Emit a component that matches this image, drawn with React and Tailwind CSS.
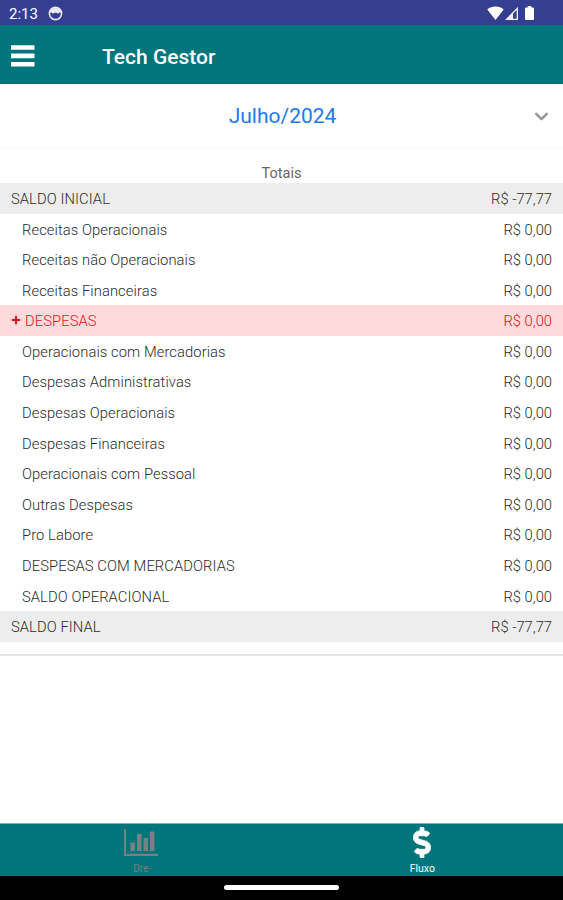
import { FaDollarSign, FaPlus } from "react-icons/fa";
import { ChevronDown } from "lucide-react";

const rows = [
  { label: "SALDO INICIAL", value: "R$ -77,77", type: "total" },
  { label: "Receitas Operacionais", value: "R$ 0,00" },
  { label: "Receitas não Operacionais", value: "R$ 0,00" },
  { label: "Receitas Financeiras", value: "R$ 0,00" },
  { label: "DESPESAS", value: "R$ 0,00", type: "expense" },
  { label: "Operacionais com Mercadorias", value: "R$ 0,00" },
  { label: "Despesas Administrativas", value: "R$ 0,00" },
  { label: "Despesas Operacionais", value: "R$ 0,00" },
  { label: "Despesas Financeiras", value: "R$ 0,00" },
  { label: "Operacionais com Pessoal", value: "R$ 0,00" },
  { label: "Outras Despesas", value: "R$ 0,00" },
  { label: "Pro Labore", value: "R$ 0,00" },
  { label: "DESPESAS COM MERCADORIAS", value: "R$ 0,00" },
  { label: "SALDO OPERACIONAL", value: "R$ 0,00" },
  { label: "SALDO FINAL", value: "R$ -77,77", type: "total" },
];

const rowStyles = {
  total: "bg-[#ededed] pl-[11px] text-[#2b2b2b]",
  expense: "bg-[#ffdadc] pl-[11px] text-[#dc1420]",
  item: "pl-[22px] text-[#2b2b2b]",
};

const StatusBar = () => (
  <div className="flex h-[25px] shrink-0 items-center justify-between bg-[#343f91] pt-[2px] pr-[29px] pl-[9px] text-white">
    <div className="flex items-center gap-[10px]">
      <span className="w-[29px] pt-[2px] text-[15px] leading-none whitespace-nowrap">2:13</span>
      <svg width="15" height="15" viewBox="0 0 15 15">
        <circle cx="7.5" cy="7.5" r="6.1" fill="none" stroke="#e8eaf5" strokeWidth="1.6" />
        <path d="M1.8 6.8A5.8 5.8 0 0 1 13.2 6.8L11.4 6.5 10 7.8 8.6 6.8H6.4L5 7.8 3.6 6.5Z" fill="#e8eaf5" />
      </svg>
    </div>
    <div className="flex items-center pb-px">
      <svg width="17" height="14" viewBox="0 0 17 14" fill="currentColor">
        <path d="M8.5 14 0.3 3.4C2.6 1.5 5.4 0.6 8.5 0.6s5.9 0.9 8.2 2.8Z" />
      </svg>
      <svg className="ml-px" width="13" height="13" viewBox="0 0 13 13">
        <path d="M1.7 12.3 12.3 1.4V12.3Z" fill="none" stroke="#f3f4fb" strokeWidth="1.3" />
        <path d="M1 12.8 8 5.8V12.8Z" fill="#f3f4fb" />
      </svg>
      <svg className="ml-[7px]" width="9" height="14" viewBox="0 0 9 14" fill="currentColor">
        <path d="M2.7 0h3.6v1.5H8A1 1 0 0 1 9 2.5V13a1 1 0 0 1-1 1H1a1 1 0 0 1-1-1V2.5a1 1 0 0 1 1-1h1.7Z" />
      </svg>
    </div>
  </div>
);

const MenuIcon = () => (
  <svg width="24" height="22" viewBox="0 0 24 22" fill="currentColor">
    <rect y="0.2" width="23.5" height="4.6" rx="0.5" />
    <rect y="8.6" width="23.5" height="4.6" rx="0.5" />
    <rect y="17" width="23.5" height="4.6" rx="0.5" />
  </svg>
);

const BarChartIcon = () => (
  <svg width="36" height="28" viewBox="0 0 36 28" fill="currentColor">
    <path d="M1 0h2v24.7H35V27H1Z" />
    <path d="M7.5 13.5h4.5v8.5H7.5ZM14 5h4.5v17H14ZM20.5 9h4.5v13h-4.5ZM27 2.5h4.5v19.5H27Z" />
  </svg>
);

const App = () => {
  return (
    <div className="flex h-[900px] w-full flex-col overflow-hidden bg-white font-['Roboto',sans-serif]">
      <StatusBar />

      {/* Header */}
      <header className="flex h-[59px] shrink-0 items-center border-b border-[#12666b] bg-[#00757b] pt-[3px] pl-[11px] text-white">
        <button aria-label="Menu" className="flex w-[91px] items-center">
          <MenuIcon />
        </button>
        <h1 className="pt-[3px] text-[21px] leading-none font-medium">Tech Gestor</h1>
      </header>

      {/* Month selector */}
      <div className="grid h-[64px] shrink-0 grid-cols-[1fr_auto_1fr] items-center pr-[11px] pl-[13px]">
        <span className="col-start-2 pt-px text-[21px] text-[#2478ed]">Julho/2024</span>
        <ChevronDown className="justify-self-end text-[#999999]" size={21} strokeWidth={3} />
      </div>

      {/* Totals */}
      <div className="shrink-0 border-t border-[#fafafa] border-b-2 border-b-[#e6e6e6] pb-[12px]">
        <div className="flex h-[34px] items-end justify-center text-[14.5px] leading-[18px] text-[#666666]">
          Totais
        </div>
        {rows.map((row) => (
          <div
            key={row.label}
            className={`flex h-[30.6px] items-center justify-between pt-[2px] pr-[11px] text-[14.75px] leading-none font-light ${rowStyles[row.type || "item"]}`}
          >
            <span className="flex items-center tracking-[0.08px]">
              {row.type === "expense" && <FaPlus className="mr-[4px] mb-[3px]" size={10} />}
              {row.label}
            </span>
            <span>{row.value}</span>
          </div>
        ))}
      </div>

      {/* Bottom tabs */}
      <nav className="mt-auto grid h-[53px] shrink-0 grid-cols-2 border-t border-[#8ba9ab] bg-[#00757b] text-[10px] leading-none">
        <button className="flex flex-col items-center pt-[5px] text-[#788083]">
          <BarChartIcon />
          <span className="mt-[7px]">Dre</span>
        </button>
        <button className="flex flex-col items-center pt-[3px] text-white">
          <FaDollarSign className="h-[31px] w-[18px]" stroke="currentColor" strokeWidth="14" strokeLinejoin="round" />
          <span className="mt-[6px] text-[10.5px]">Fluxo</span>
        </button>
      </nav>

      {/* System gesture bar */}
      <div className="flex h-[24px] shrink-0 justify-center bg-black pt-[9px]">
        <div className="h-[5px] w-[115px] rounded-full bg-white" />
      </div>
    </div>
  );
};

export default App;
